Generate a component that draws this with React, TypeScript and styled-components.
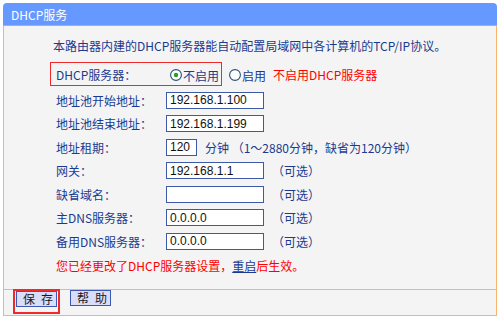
import styled, { createGlobalStyle } from "styled-components";

const GlobalStyle = createGlobalStyle`
  html, body {
    margin: 0;
    padding: 0;
    background: #ffffff;
  }
  body {
    font-family: "Noto Sans CJK SC", "Liberation Sans", sans-serif;
    font-size: 12px;
  }
`;

const Panel = styled.div`
  margin: 3px;
  width: 494px;
`;

const Header = styled.div`
  height: 22px;
  background: #6699ff;
  border-bottom: 1px solid #8db1ff;
  border-radius: 4px 4px 0 0;
  color: #ffffff;
  display: flex;
  align-items: center;
  padding-left: 8px;
  font-size: 12px;
`;

const Body = styled.div`
  background: #f4f4f4;
  border-left: 1px solid #f8b46c;
  border-right: 1px solid #f8b46c;
  height: 263px;
  box-sizing: border-box;
  padding: 12px 0 0 46px;
  color: #1b3a8f;
`;

const Intro = styled.div`
  line-height: 16px;
  margin-left: 3px;
  margin-bottom: 8px;
  white-space: nowrap;
`;

const SwitchRow = styled.div`
  display: flex;
  align-items: center;
  height: 24px;
  margin-bottom: 2.5px;
`;

const Highlight = styled.div`
  display: flex;
  align-items: center;
  box-sizing: border-box;
  width: 172px;
  height: 24px;
  border: 1px solid #ee2a2a;
  padding-left: 5px;
`;

const Label = styled.span`
  width: 110px;
  flex: none;
  white-space: nowrap;
`;

const RadioOption = styled.label<{ $gap: number }>`
  display: flex;
  align-items: center;
  margin-left: ${(p) => p.$gap}px;
  margin-top: 2px;
  gap: 1px;
  white-space: nowrap;
`;

const Note = styled.span`
  color: #ff0000;
  margin-left: 7px;
  white-space: nowrap;
`;

const FieldRow = styled.div`
  display: flex;
  align-items: center;
  height: 23.5px;
  padding-left: 6px;
`;

const Field = styled.div<{ $w: number }>`
  width: ${(p) => p.$w}px;
  height: 17px;
  box-sizing: border-box;
  background: #ffffff;
  border: 1px solid #3d5aa8;
  flex: none;
  display: flex;
  align-items: center;
  padding-left: 3px;
  font-family: "Liberation Sans", Arial, sans-serif;
  font-size: 12px;
  color: #111111;
`;

const Hint = styled.span<{ $gap: number }>`
  margin-left: ${(p) => p.$gap}px;
  white-space: nowrap;
`;

const Message = styled.div`
  color: #ff0000;
  line-height: 16px;
  margin-top: 5px;
  margin-left: 6px;
  white-space: nowrap;
`;

const Link = styled.a`
  color: #1b3a8f;
  text-decoration: underline;
`;

const Footer = styled.div`
  height: 25px;
  background: #f4f4f4;
  border: 1px solid #f8b46c;
  display: flex;
  align-items: flex-start;
  padding-left: 9px;
`;

const SaveHighlight = styled.div`
  box-sizing: border-box;
  height: 25px;
  margin-top: -1px;
  padding: 0 1px;
  border: 2px solid #ee2a2a;
  display: flex;
  align-items: flex-start;
`;

const Button = styled.button<{ $gap?: number }>`
  width: 41px;
  height: 16px;
  box-sizing: border-box;
  margin: 0 0 0 ${(p) => p.$gap ?? 0}px;
  padding: 0 0 0 6px;
  border: 1px solid #3c57b5;
  background: #d8ddfa;
  color: #1a1a1a;
  font-family: "Noto Sans CJK SC", sans-serif;
  font-size: 12px;
  line-height: 14px;
  letter-spacing: 6px;
  text-align: center;
  white-space: nowrap;
`;

const Radio = ({ checked }: { checked?: boolean }) => (
  <svg width="12" height="12" viewBox="0 0 12 12">
    <circle cx="6" cy="6" r="5.4" fill="#ffffff" stroke="#2a4f78" strokeWidth="1.1" />
    {checked && <circle cx="6" cy="6" r="2.2" fill="#22a12a" />}
  </svg>
);

const fields = [
  { label: "地址池开始地址：", value: "192.168.1.100", width: 98 },
  { label: "地址池结束地址：", value: "192.168.1.199", width: 98 },
  { label: "地址租期：", value: "120", width: 31, hint: "分钟 （1～2880分钟，缺省为120分钟）", gap: 8 },
  { label: "网关：", value: "192.168.1.1", width: 98, hint: "（可选）", gap: 8 },
  { label: "缺省域名：", value: "", width: 98, hint: "（可选）", gap: 8 },
  { label: "主DNS服务器：", value: "0.0.0.0", width: 98, hint: "（可选）", gap: 8 },
  { label: "备用DNS服务器：", value: "0.0.0.0", width: 98, hint: "（可选）", gap: 8 },
];

export default function App() {
  return (
    <>
      <GlobalStyle />
      <Panel>
        <Header>DHCP服务</Header>
        <Body>
          <Intro>本路由器内建的DHCP服务器能自动配置局域网中各计算机的TCP/IP协议。</Intro>
          <SwitchRow>
            <Highlight>
              <Label>DHCP服务器：</Label>
              <RadioOption $gap={4}>
                <Radio checked />
                不启用
              </RadioOption>
            </Highlight>
            <RadioOption $gap={7}>
              <Radio />
              启用
            </RadioOption>
            <Note>不启用DHCP服务器</Note>
          </SwitchRow>
          {fields.map((f) => (
            <FieldRow key={f.label}>
              <Label>{f.label}</Label>
              <Field $w={f.width}>{f.value}</Field>
              {f.hint && <Hint $gap={f.gap ?? 8}>{f.hint}</Hint>}
            </FieldRow>
          ))}
          <Message>
            您已经更改了DHCP服务器设置，<Link>重启</Link>后生效。
          </Message>
        </Body>
        <Footer>
          <SaveHighlight>
            <Button>保存</Button>
          </SaveHighlight>
          <Button $gap={10}>帮助</Button>
        </Footer>
      </Panel>
    </>
  );
}
